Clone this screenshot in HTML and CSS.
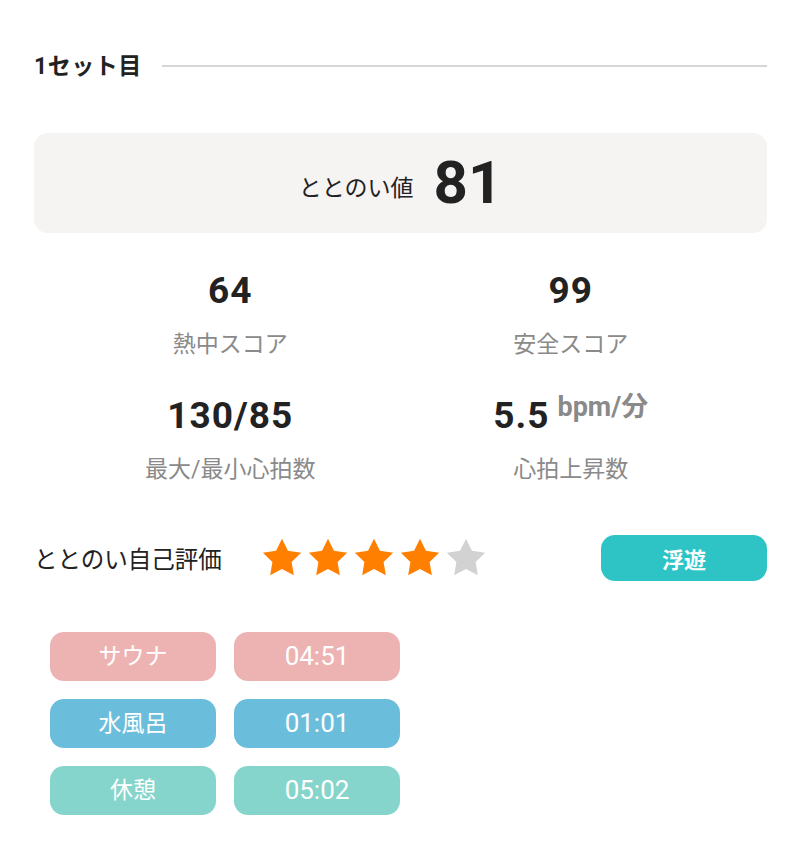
FILE: index.html
```html
<!DOCTYPE html>
<html lang="ja">
<head>
<meta charset="utf-8">
<link rel="stylesheet" href="styles.css">
</head>
<body>
<div class="page">
  <div class="set-header">
    <span class="set-title">1セット目</span>
    <span class="set-line"></span>
  </div>

  <div class="score-box">
    <span class="score-label">ととのい値</span>
    <span class="score-value">81</span>
  </div>

  <div class="stats">
    <div class="stat">
      <div class="stat-value">64</div>
      <div class="stat-label">熱中スコア</div>
    </div>
    <div class="stat">
      <div class="stat-value">99</div>
      <div class="stat-label">安全スコア</div>
    </div>
    <div class="stat">
      <div class="stat-value">130/85</div>
      <div class="stat-label">最大/最小心拍数</div>
    </div>
    <div class="stat">
      <div class="stat-value">5.5 <span class="unit">bpm/分</span></div>
      <div class="stat-label">心拍上昇数</div>
    </div>
  </div>

  <div class="rating-row">
    <span class="rating-label">ととのい自己評価</span>
    <div class="stars">
      <svg class="star on" viewBox="0 0 24 24"><polygon points="12,2 15.09,8.26 22,9.27 17,14.14 18.18,21.02 12,17.77 5.82,21.02 7,14.14 2,9.27 8.91,8.26"/></svg>
      <svg class="star on" viewBox="0 0 24 24"><polygon points="12,2 15.09,8.26 22,9.27 17,14.14 18.18,21.02 12,17.77 5.82,21.02 7,14.14 2,9.27 8.91,8.26"/></svg>
      <svg class="star on" viewBox="0 0 24 24"><polygon points="12,2 15.09,8.26 22,9.27 17,14.14 18.18,21.02 12,17.77 5.82,21.02 7,14.14 2,9.27 8.91,8.26"/></svg>
      <svg class="star on" viewBox="0 0 24 24"><polygon points="12,2 15.09,8.26 22,9.27 17,14.14 18.18,21.02 12,17.77 5.82,21.02 7,14.14 2,9.27 8.91,8.26"/></svg>
      <svg class="star off" viewBox="0 0 24 24"><polygon points="12,2 15.09,8.26 22,9.27 17,14.14 18.18,21.02 12,17.77 5.82,21.02 7,14.14 2,9.27 8.91,8.26"/></svg>
    </div>
    <span class="badge">浮遊</span>
  </div>

  <div class="chips">
    <div class="chip sauna">サウナ</div>
    <div class="chip sauna num">04:51</div>
    <div class="chip water">水風呂</div>
    <div class="chip water num">01:01</div>
    <div class="chip rest">休憩</div>
    <div class="chip rest num">05:02</div>
  </div>
</div>
</body>
</html>
```

FILE: styles.css
```css
html, body {
  margin: 0;
  padding: 0;
  background: #ffffff;
}

body {
  font-family: Roboto, "Noto Sans CJK JP", sans-serif;
  color: #222222;
}

.page {
  padding: 52px 33px 0 34px;
}

.set-header {
  display: flex;
  align-items: center;
  height: 30px;
}

.set-title {
  font-size: 23px;
  font-weight: 700;
  letter-spacing: 0.5px;
  color: #222;
  line-height: 30px;
  white-space: nowrap;
}

.set-line {
  flex: 1;
  height: 2px;
  background: #d6d6d6;
  margin-left: 20px;
  margin-top: -2px;
}

.score-box {
  margin-top: 51px;
  height: 100px;
  background: #f6f4f3;
  border-radius: 14px;
  display: flex;
  align-items: center;
  justify-content: center;
  gap: 20px;
}

.score-label {
  font-size: 23px;
  color: #222;
  margin-top: 6px;
}

.score-value {
  font-size: 60px;
  font-weight: 700;
  color: #222;
  line-height: 1;
}

.stats {
  display: grid;
  grid-template-columns: 1fr 1fr;
  padding: 0 26px;
  margin-top: 36px;
  row-gap: 32px;
}

.stat {
  display: flex;
  flex-direction: column;
  align-items: center;
}

.stat-value {
  font-size: 37px;
  font-weight: 700;
  letter-spacing: 1px;
  line-height: 44px;
  color: #222;
  display: flex;
  align-items: flex-start;
  gap: 8px;
}

.unit {
  font-size: 27px;
  letter-spacing: 0;
  color: #8a8a8a;
  line-height: 30px;
  margin-top: -2px;
}

.stat-label {
  margin-top: 15px;
  font-size: 23px;
  line-height: 34px;
  color: #8a8a8a;
}

.rating-row {
  margin-top: 48px;
  display: flex;
  align-items: center;
  height: 46px;
}

.rating-label {
  font-size: 23.5px;
  color: #222;
  white-space: nowrap;
}

.stars {
  display: flex;
  margin-left: 37px;
}

.star {
  width: 46px;
  height: 46px;
}

.star.on polygon {
  fill: #ff7f00;
}

.star.off polygon {
  fill: #d2d2d2;
}

.badge {
  margin-left: auto;
  width: 166px;
  height: 46px;
  border-radius: 14px;
  background: #2ec4c6;
  color: #ffffff;
  font-size: 22px;
  font-weight: 700;
  display: flex;
  align-items: center;
  justify-content: center;
}

.chips {
  margin-top: 51px;
  margin-left: 16px;
  display: grid;
  grid-template-columns: 166px 166px;
  column-gap: 18px;
  row-gap: 18px;
}

.chip {
  height: 49px;
  box-sizing: border-box;
  border-radius: 14px;
  color: #ffffff;
  font-size: 23px;
  line-height: 1;
  display: flex;
  align-items: center;
  justify-content: center;
}

.chip.num {
  font-size: 26px;
  padding-bottom: 1px;
}

.chip.sauna {
  background: #ecb3b2;
}

.chip.water {
  background: #6bbedb;
}

.chip.rest {
  background: #86d5cc;
}
```
